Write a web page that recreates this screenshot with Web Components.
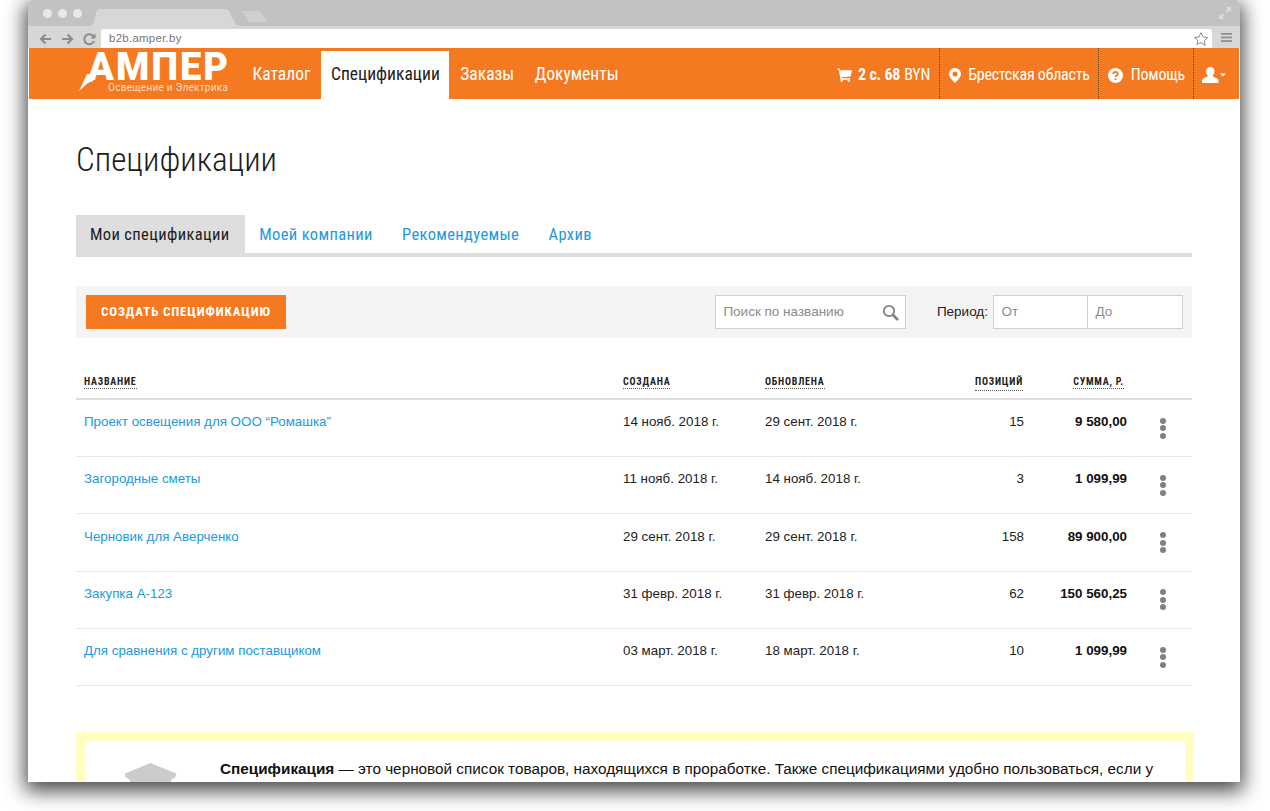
<!doctype html>
<html lang="ru">
<head>
<meta charset="utf-8">
<title>Спецификации</title>
<style>
    html, body { margin: 0; height: 811px; overflow: hidden; background: #fff; }
    body { font-family: "Liberation Sans", Arial, sans-serif; }
</style>
</head>
<body>
<browser-frame url="b2b.amper.by">
    <top-nav></top-nav>
    <main-page>
        <page-title>Спецификации</page-title>
        <spec-tabs>
            <tab-link active>Мои спецификации</tab-link>
            <tab-link>Моей компании</tab-link>
            <tab-link>Рекомендуемые</tab-link>
            <tab-link>Архив</tab-link>
        </spec-tabs>
        <spec-toolbar></spec-toolbar>
        <spec-table>
            <spec-row name="Проект освещения для ООО “Ромашка”" created="14 нояб. 2018 г." updated="29 сент. 2018 г." count="15" sum="9 580,00"></spec-row>
            <spec-row name="Загородные сметы" created="11 нояб. 2018 г." updated="14 нояб. 2018 г." count="3" sum="1 099,99"></spec-row>
            <spec-row name="Черновик для Аверченко" created="29 сент. 2018 г." updated="29 сент. 2018 г." count="158" sum="89 900,00"></spec-row>
            <spec-row name="Закупка А-123" created="31 февр. 2018 г." updated="31 февр. 2018 г." count="62" sum="150 560,25"></spec-row>
            <spec-row name="Для сравнения с другим поставщиком" created="03 март. 2018 г." updated="18 март. 2018 г." count="10" sum="1 099,99"></spec-row>
        </spec-table>
        <info-note><b>Спецификация</b> — это черновой список товаров, находящихся в проработке. Также спецификациями удобно пользоваться, если у</info-note>
    </main-page>
</browser-frame>

<script>
const condensed = `"Roboto Condensed", Roboto, sans-serif`;
const arial = `"Liberation Sans", Arial, sans-serif`;

class BrowserFrame extends HTMLElement {
    constructor() {
        super();
        this.attachShadow({ mode: 'open' });
        this.shadowRoot.innerHTML = /* html */ `
            <style>
                :host {
                    width: 1212px;
                    height: 782px;
                    margin-left: 28px;
                    background: #fff;
                    border-radius: 5px 5px 0 0;
                    box-shadow: 0 6px 20px 3px rgba(0,0,0,.72);
                    overflow: hidden;
                    display: flex;
                    flex-direction: column;
                }
                .strip {
                    height: 26px;
                    background: #c2c2c2;
                    display: flex;
                    align-items: flex-end;
                    flex: none;
                    padding-left: 14.500px;
                }
                .dots { display: flex; gap: 6px; align-self: center; margin-right: 6.500px; }
                .dots i { width: 9px; height: 9px; border-radius: 50%; background: #e8e8e8; display: block; }
                .tabs { display: block; flex: none; }
                .expand { margin-left: auto; margin-right: 9px; align-self: center; }
                .bar {
                    height: 22px;
                    background: #d7d7d7;
                    display: flex;
                    align-items: flex-end;
                    flex: none;
                }
                .controls { width: 73px; height: 19px; display: block; flex: none; }
                .address {
                    flex: 1;
                    height: 19px;
                    background: #fff;
                    border-radius: 3px 3px 0 0;
                    display: flex;
                    align-items: center;
                    padding: 0 3px 0 8px;
                    font: 11.5px/19px ${arial};
                    letter-spacing: .25px;
                    color: #777;
                }
                .address svg { margin-left: auto; }
                .menu { width: 28px; height: 22px; display: flex; align-items: center; justify-content: center; flex: none; }
                .content { flex: 1; min-height: 0; display: flex; flex-direction: column; overflow: hidden; }
            </style>
            <div class="strip">
                <div class="dots"><i></i><i></i><i></i></div>
                <svg class="tabs" width="180" height="17" viewBox="0 0 180 17">
                    <path d="M0 17C3 17 5 16 6 13L8 4C8.500 1.500 10 0 13 0H136C139 0 141 1.500 142 4L147 14C148 16 150 17 154 17Z" fill="#d7d7d7"/>
                    <path d="M154 2H170C171 2 172 2.500 173 4L179 12C179.500 13 179 13 178 13H163C162 13 161.500 12.500 161 12Z" fill="#cfcfcf"/>
                </svg>
                <svg class="expand" width="12" height="12" viewBox="0 0 12 12" fill="#dcdcdc">
                    <path d="M7 0h5v5l-1.800-1.800L8 5.400 6.600 4 8.800 1.800zM5 12H0V7l1.800 1.800L4 6.600 5.400 8 3.200 10.200z"/>
                </svg>
            </div>
            <div class="bar">
                <svg class="controls" viewBox="0 0 73 19" fill="none" stroke="#8c8c8c" stroke-width="2.200">
                    <path d="M23 10H13M17.500 5.500 13 10l4.500 4.500M34 10h10M39.500 5.500 44 10l-4.500 4.500"/>
                    <path d="M65.500 7.500a5 5 0 1 0 .5 4.500" stroke-width="2"/>
                    <path d="M67.500 4.500v5h-5z" fill="#8c8c8c" stroke="none"/>
                </svg>
                <div class="address">
                    <span>${this.getAttribute('url')}</span>
                    <svg width="16" height="16" viewBox="0 0 24 24" fill="#fff" stroke="#8a8a8a" stroke-width="1.500">
                        <path d="m12 2.500 3 6.400 7 .9-5.100 4.800 1.300 6.900L12 17.200l-6.200 3.300 1.300-6.900L2 9.800l7-.9z"/>
                    </svg>
                </div>
                <div class="menu">
                    <svg width="11" height="9" viewBox="0 0 11 9" fill="#8c8c8c">
                        <rect width="11" height="1.700"/><rect y="3.600" width="11" height="1.700"/><rect y="7.200" width="11" height="1.700"/>
                    </svg>
                </div>
            </div>
            <div class="content"><slot></slot></div>
        `;
    }
}

class TopNav extends HTMLElement {
    constructor() {
        super();
        this.attachShadow({ mode: 'open' });
        this.shadowRoot.innerHTML = /* html */ `
            <style>
                :host {
                    display: flex;
                    flex: none;
                    height: 51px;
                    margin: 0 1px;
                    background: #f47920;
                    color: #fff;
                    font: 400 17.500px/1 ${condensed};
                }
                .logo {
                    position: relative;
                    width: 164px;
                    margin-left: 50px;
                    flex: none;
                }
                .logo b {
                    position: absolute;
                    left: 9px;
                    top: 6px;
                    font: 900 38px/27px Roboto, sans-serif;
                    letter-spacing: 2px;
                    white-space: nowrap;
                }
                .logo small {
                    position: absolute;
                    left: 29px;
                    top: 34px;
                    font: 400 10px/12px Roboto, sans-serif;
                    letter-spacing: .27px;
                    color: #ffdcc0;
                    white-space: nowrap;
                }
                .logo svg { position: absolute; left: 0; top: 0; }
                nav { display: flex; gap: 1.500px; }
                nav a {
                    display: flex;
                    align-items: center;
                    padding: 3px 9.500px 0;
                }
                nav a.on {
                    background: #fff;
                    color: #222;
                    margin-top: 3px;
                    padding-top: 0;
                }
                .right { margin-left: auto; display: flex; font-size: 16px; letter-spacing: -.22px; }
                .right div {
                    display: flex;
                    align-items: center;
                    padding-top: 3px;
                    box-sizing: border-box;
                    border-left: 1px dotted rgba(70,40,10,.75);
                }
                .right div:first-child { border-left: 0; }
                .cart { padding-right: 8.500px; }
                .cart svg { margin-right: 6px; }
                .cart b { font-weight: 700; margin-right: 4px; }
                .place { padding: 0 8px 0 9.500px; }
                .place svg { margin-right: 7px; }
                .help { padding: 0 7.500px 0 9px; }
                .help svg { margin-right: 8px; }
                .user { padding: 0 13px 0 8.500px; }
            </style>
            <div class="logo">
                <svg width="50" height="51" viewBox="0 0 50 51" fill="#fff">
                    <path d="M0 43 8 26h8l-2 7-5 2z"/>
                </svg>
                <b>АМПЕР</b>
                <small>Освещение и Электрика</small>
            </div>
            <nav>
                <a>Каталог</a>
                <a class="on">Спецификации</a>
                <a>Заказы</a>
                <a>Документы</a>
            </nav>
            <div class="right">
                <div class="cart">
                    <svg width="15" height="14" viewBox="0 0 16 14" fill="#fff">
                        <path d="M0 0h3l.6 2H16l-1.500 6.500-9.700 1 .3 1H14V12H3.800L1.900 1.500H0z"/>
                        <circle cx="5" cy="13" r="1.300"/><circle cx="12.500" cy="13" r="1.300"/>
                    </svg>
                    <b>2 с. 68</b> BYN
                </div>
                <div class="place">
                    <svg width="12" height="15" viewBox="0 0 12 15">
                        <path fill="#fff" fill-rule="evenodd" d="M6 0a6 6 0 0 1 6 6c0 3-3.500 6.500-6 9-2.500-2.500-6-6-6-9a6 6 0 0 1 6-6zm0 3.500a2.500 2.500 0 1 0 0 5 2.500 2.500 0 0 0 0-5z"/>
                    </svg>
                    Брестская область
                </div>
                <div class="help">
                    <svg width="15" height="15" viewBox="0 0 15 15">
                        <circle cx="7.500" cy="7.500" r="7.500" fill="#fff"/>
                        <path d="M5.200 6c0-1.400 1-2.200 2.300-2.200S9.800 4.600 9.800 5.900c0 1.600-2.300 1.700-2.300 3.200" fill="none" stroke="#f47920" stroke-width="1.800"/>
                        <rect x="6.600" y="10.200" width="1.800" height="1.800" fill="#f47920"/>
                    </svg>
                    Помощь
                </div>
                <div class="user">
                    <svg width="24" height="16" viewBox="0 0 24 16" fill="#fff">
                        <path d="M8.500 0c2.500 0 4 1.800 4 4.500 0 1.800-.8 3.200-1.700 4 0 1 .5 1.300 2.700 2.200 2 .8 3 1.500 3 2.800V16H0v-2.500c0-1.300 1-2 3-2.800 2.200-.9 2.700-1.200 2.700-2.200-.9-.8-1.700-2.200-1.700-4C4 1.800 6 0 8.500 0z"/>
                        <path d="M18 6.500h6l-3 3z"/>
                    </svg>
                </div>
            </div>
        `;
    }
}

class MainPage extends HTMLElement {
    constructor() {
        super();
        this.attachShadow({ mode: 'open' });
        this.shadowRoot.innerHTML = `
            <style>
                :host { display: block; padding: 0 48px; flex: none; }
            </style>
            <slot></slot>
        `;
    }
}

class PageTitle extends HTMLElement {
    constructor() {
        super();
        this.attachShadow({ mode: 'open' });
        this.shadowRoot.innerHTML = `
            <style>
                :host {
                    display: block;
                    padding-top: 41px;
                    height: 75px;
                    font: 300 33.200px/40px ${condensed};
                    color: #1c1c1c;
                }
            </style>
            <slot></slot>
        `;
    }
}

class SpecTabs extends HTMLElement {
    constructor() {
        super();
        this.attachShadow({ mode: 'open' });
        this.shadowRoot.innerHTML = `
            <style>
                :host {
                    display: flex;
                    height: 38px;
                    border-bottom: 4px solid #dedede;
                }
            </style>
            <slot></slot>
        `;
    }
}

class TabLink extends HTMLElement {
    constructor() {
        super();
        this.attachShadow({ mode: 'open' });
        this.shadowRoot.innerHTML = `
            <style>
                :host {
                    display: block;
                    padding: 1px 15.400px 0 14px;
                    font: 400 16.500px/38px ${condensed};
                    letter-spacing: .35px;
                    color: #2299dd;
                }
                :host([active]) { background: #dedede; color: #1c1c1c; height: 41px; padding-right: 15.800px; }
            </style>
            <slot></slot>
        `;
    }
}

class SpecToolbar extends HTMLElement {
    constructor() {
        super();
        this.attachShadow({ mode: 'open' });
        this.shadowRoot.innerHTML = /* html */ `
            <style>
                :host {
                    display: flex;
                    align-items: center;
                    height: 52px;
                    margin-top: 29px;
                    padding: 0 9px 0 10px;
                    background: #f4f4f4;
                    font: 13.500px/1 ${arial};
                }
                button {
                    width: 200px;
                    height: 34px;
                    padding: 0;
                    border: 0;
                    background: #f47920;
                    color: #fff;
                    font: 700 13px/34px ${condensed};
                    letter-spacing: .85px;
                }
                .field {
                    height: 34px;
                    box-sizing: border-box;
                    background: #fff;
                    border: 1px solid #d0d0d0;
                    color: #8c8c8c;
                    display: flex;
                    align-items: center;
                    padding-left: 7.500px;
                }
                .search { width: 191px; margin-left: auto; }
                .search svg { margin-left: auto; margin-right: 6px; }
                label { margin: 0 5px 0 31px; color: #222; }
                .from { width: 95px; }
                .to { width: 96px; margin-left: -1px; }
            </style>
            <button>СОЗДАТЬ СПЕЦИФИКАЦИЮ</button>
            <div class="field search">
                Поиск по названию
                <svg width="17" height="17" viewBox="0 0 17 17" fill="none" stroke="#808080">
                    <circle cx="7" cy="7" r="5.200" stroke-width="1.800"/>
                    <path d="m11 11 5 5" stroke-width="2.600"/>
                </svg>
            </div>
            <label>Период:</label>
            <div class="field from">От</div>
            <div class="field to">До</div>
        `;
    }
}

const rowColumns = 'grid-template-columns: 539px 142px 259px 103px 65px;';

class SpecTable extends HTMLElement {
    constructor() {
        super();
        this.attachShadow({ mode: 'open' });
        this.shadowRoot.innerHTML = /* html */ `
            <style>
                :host { display: block; margin-top: 37px; }
                .head {
                    display: grid;
                    ${rowColumns}
                    height: 23px;
                    padding-left: 8px;
                    border-bottom: 2px solid #dedede;
                    font: 700 10px/14px ${condensed};
                    letter-spacing: .78px;
                    color: #222;
                }
                .head div:nth-child(4) { text-align: right; padding-right: 3px; }
                span { border-bottom: 1px dotted #555; padding-bottom: 1px; }
            </style>
            <div class="head">
                <div><span>НАЗВАНИЕ</span></div>
                <div><span>СОЗДАНА</span></div>
                <div><span>ОБНОВЛЕНА</span><span style="float:right;margin-right:1px">ПОЗИЦИЙ</span></div>
                <div><span>СУММА, Р.</span></div>
                <div></div>
            </div>
            <slot></slot>
        `;
    }
}

class SpecRow extends HTMLElement {
    constructor() {
        super();
        this.attachShadow({ mode: 'open' });
        const a = n => this.getAttribute(n);
        this.shadowRoot.innerHTML = /* html */ `
            <style>
                :host {
                    display: grid;
                    ${rowColumns}
                    box-sizing: border-box;
                    height: 57.200px;
                    padding: 14.300px 0 0 8px;
                    border-bottom: 1px solid #e6e6e6;
                    font: 13.350px/16px ${arial};
                    color: #222;
                }
                a { color: #2299dd; }
                .num { text-align: right; }
                b { color: #111; }
                .more { display: flex; flex-direction: column; gap: 1.500px; margin: 3.500px 0 0 33px; }
                .more i { display: block; width: 6px; height: 6px; border-radius: 50%; background: #808080; }
            </style>
            <div><a>${a('name')}</a></div>
            <div>${a('created')}</div>
            <div style="display:flex;justify-content:space-between"><span>${a('updated')}</span><span>${a('count')}</span></div>
            <div class="num"><b>${a('sum')}</b></div>
            <div class="more"><i></i><i></i><i></i></div>
        `;
    }
}

class InfoNote extends HTMLElement {
    constructor() {
        super();
        this.attachShadow({ mode: 'open' });
        this.shadowRoot.innerHTML = /* html */ `
            <style>
                :host {
                    display: flex;
                    margin-top: 46px;
                    width: 1118px;
                    box-sizing: border-box;
                    border: 9.500px solid #fffdc0;
                    background: #fff;
                    padding: 19px 0 60px 39px;
                    font: 15.300px/18px ${arial};
                    color: #111;
                }
                svg { flex: none; margin-top: 3px; margin-right: 43px; }
                div { white-space: nowrap; }
            </style>
            <svg width="53" height="40" viewBox="0 0 53 40" fill="#cccccc">
                <path d="M26.500 0 51 10c1.500.5 1.500 3 .5 4L47 17V40H6V17L1.500 14c-1-1-1-3.500.5-4z"/>
            </svg>
            <div><slot></slot></div>
        `;
    }
}

customElements.define('browser-frame', BrowserFrame);
customElements.define('top-nav', TopNav);
customElements.define('main-page', MainPage);
customElements.define('page-title', PageTitle);
customElements.define('spec-tabs', SpecTabs);
customElements.define('tab-link', TabLink);
customElements.define('spec-toolbar', SpecToolbar);
customElements.define('spec-table', SpecTable);
customElements.define('spec-row', SpecRow);
customElements.define('info-note', InfoNote);
</script>
</body>
</html>
